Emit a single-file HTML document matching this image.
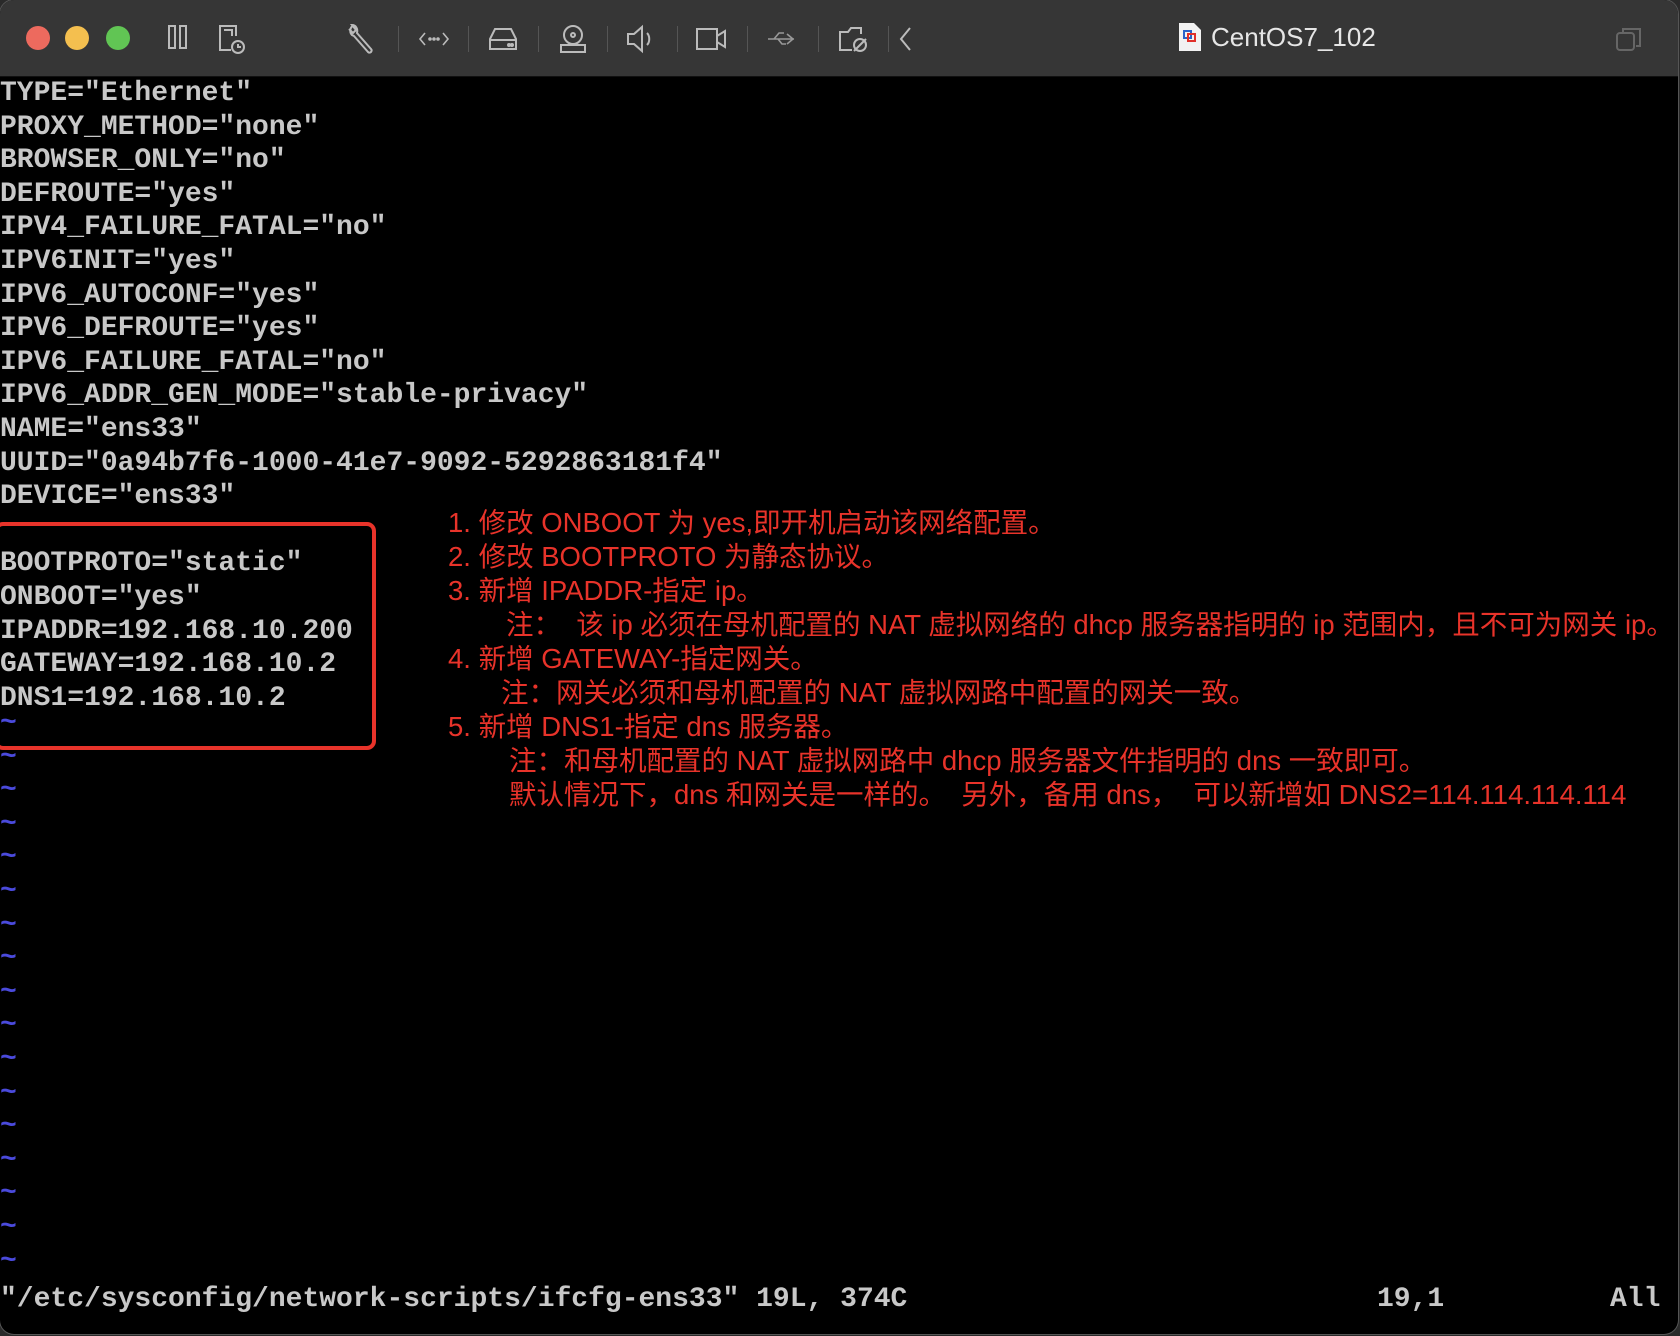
<!DOCTYPE html>
<html><head><meta charset="utf-8"><style>
html,body{margin:0;padding:0;background:#2a2a2a;width:1680px;height:1336px;overflow:hidden}
.win{position:absolute;left:0;top:0;width:1678px;height:1334px;border-radius:14px;overflow:hidden;background:#000;box-shadow:0 0 0 1px #555}
.bar{position:absolute;left:0;top:0;right:0;height:76px;background:#363636;border-bottom:1px solid #111}
.dot{position:absolute;top:26px;width:24px;height:24px;border-radius:50%}
.ic{position:absolute;top:22px}
.sep{position:absolute;top:26px;width:1px;height:26px;background:#555}
.title{position:absolute;left:1211px;top:22px;font:26px "Liberation Sans",sans-serif;color:#e6e6e6}
.term{position:absolute;left:0;top:77px;font:28px/33.6px "Liberation Mono",monospace;color:#c8c8c8;white-space:pre;font-weight:bold}
.tl{position:absolute;left:0;top:707px;font:bold 28px/33.6px "Liberation Mono",monospace;color:#4a4adc;white-space:pre}
.box{position:absolute;left:-6px;top:522px;width:374px;height:220px;border:4px solid #e8332a;border-radius:9px}
.note{position:absolute;color:#e8332a;font:27.5px "Liberation Sans","Noto Sans CJK SC",sans-serif;white-space:pre;line-height:34px}
.status{position:absolute;top:1284px;font:28px "Liberation Mono",monospace;color:#c8c8c8;white-space:pre;font-weight:bold}
</style></head><body>
<div class="win">
<div class="bar">
<div class="dot" style="left:26px;background:#ed6a5e"></div>
<div class="dot" style="left:65px;background:#f4bf4f"></div>
<div class="dot" style="left:106px;background:#61c554"></div>
<svg class="ic" style="left:166px" width="26" height="32" viewBox="0 0 26 32" fill="none" stroke="#bbb" stroke-width="2"><rect x="3" y="4" width="6" height="22"/><rect x="14" y="4" width="6" height="22"/></svg>
<svg class="ic" style="left:216px" width="32" height="34" viewBox="0 0 32 34" fill="none" stroke="#bbb" stroke-width="2"><path d="M15 28H4V4h16v10"/><path d="M8 8h8v6"/><circle cx="22" cy="25" r="6"/><path d="M22 22v3h3"/></svg>
<svg class="ic" style="left:346px" width="32" height="34" viewBox="0 0 32 34" fill="none" stroke="#bbb" stroke-width="2"><path d="M8 3c-4 2-5 7-2 10l2 1 14 16c2 2 5-1 3-3L11 11c1-4-1-8-5-8l4 5-3 3-4-4"/></svg>
<div class="sep" style="left:398px"></div>
<svg class="ic" style="left:417px" width="34" height="34" viewBox="0 0 34 34" fill="none" stroke="#bbb" stroke-width="1.6"><path d="M8 11l-5 6 5 6M26 11l5 6-5 6"/><circle cx="13" cy="17" r="1" fill="#bbb"/><circle cx="17" cy="17" r="1" fill="#bbb"/><circle cx="21" cy="17" r="1" fill="#bbb"/></svg>
<div class="sep" style="left:468px"></div>
<svg class="ic" style="left:486px" width="34" height="34" viewBox="0 0 34 34" fill="none" stroke="#bbb" stroke-width="2"><path d="M4 27V17l5-10h16l5 10v10z"/><path d="M4 18h26"/><circle cx="23" cy="23" r="1" fill="#bbb"/><circle cx="26" cy="23" r="1" fill="#bbb"/></svg>
<div class="sep" style="left:538px"></div>
<svg class="ic" style="left:556px" width="34" height="34" viewBox="0 0 34 34" fill="none" stroke="#bbb" stroke-width="2"><circle cx="17" cy="13" r="9"/><circle cx="17" cy="13" r="2"/><rect x="5" y="23" width="24" height="7"/></svg>
<div class="sep" style="left:607px"></div>
<svg class="ic" style="left:624px" width="34" height="34" viewBox="0 0 34 34" fill="none" stroke="#bbb" stroke-width="2"><path d="M4 12h6l8-7v24l-8-7H4z"/><path d="M23 11c3 3 3 9 0 12"/></svg>
<div class="sep" style="left:677px"></div>
<svg class="ic" style="left:694px" width="34" height="34" viewBox="0 0 34 34" fill="none" stroke="#bbb" stroke-width="2"><rect x="3" y="7" width="20" height="20"/><path d="M23 14l8-5v16l-8-5"/></svg>
<div class="sep" style="left:747px"></div>
<svg class="ic" style="left:765px" width="34" height="34" viewBox="0 0 34 34" fill="none" stroke="#999" stroke-width="1.6"><path d="M3 17h26M22 12l6 5-6 5M9 17l5-6h5M13 17l4 5h4"/></svg>
<div class="sep" style="left:818px"></div>
<svg class="ic" style="left:836px" width="36" height="34" viewBox="0 0 36 34" fill="none" stroke="#bbb" stroke-width="2"><path d="M16 28H4V10h8l3-4h10v6"/><circle cx="24" cy="23" r="6"/><path d="M18 29l12-12"/></svg>
<div class="sep" style="left:888px"></div>
<svg class="ic" style="left:896px" width="20" height="34" viewBox="0 0 20 34" fill="none" stroke="#bbb" stroke-width="2"><path d="M14 6L5 17l9 11"/></svg>
<svg class="ic" style="left:1178px;top:22px" width="24" height="30" viewBox="0 0 24 30"><path d="M1 1h15l7 7v21H1z" fill="#f2f2f2"/><rect x="6" y="9" width="7" height="7" fill="none" stroke="#2a62c9" stroke-width="2"/><rect x="10" y="12" width="7" height="7" fill="none" stroke="#e0302a" stroke-width="2"/></svg>
<div class="title">CentOS7_102</div>
<svg class="ic" style="left:1614px;top:24px" width="30" height="30" viewBox="0 0 30 30" fill="none" stroke="#666" stroke-width="2"><rect x="3" y="9" width="17" height="17" rx="3"/><path d="M9 8V5h17v17h-4"/></svg>
</div>
<div class="term">TYPE="Ethernet"
PROXY_METHOD="none"
BROWSER_ONLY="no"
DEFROUTE="yes"
IPV4_FAILURE_FATAL="no"
IPV6INIT="yes"
IPV6_AUTOCONF="yes"
IPV6_DEFROUTE="yes"
IPV6_FAILURE_FATAL="no"
IPV6_ADDR_GEN_MODE="stable-privacy"
NAME="ens33"
UUID="0a94b7f6-1000-41e7-9092-5292863181f4"
DEVICE="ens33"

BOOTPROTO="static"
ONBOOT="yes"
IPADDR=192.168.10.200
GATEWAY=192.168.10.2
DNS1=192.168.10.2</div>
<div class="tl">~
~
~
~
~
~
~
~
~
~
~
~
~
~
~
~
~</div>
<div class="box"></div>
<div class="note" style="left:448px;top:506px">1. 修改 ONBOOT 为 yes,即开机启动该网络配置。
2. 修改 BOOTPROTO 为静态协议。
3. 新增 IPADDR-指定 ip。</div>
<div class="note" style="left:506px;top:608px">注：  该 ip 必须在母机配置的 NAT 虚拟网络的 dhcp 服务器指明的 ip 范围内，且不可为网关 ip。</div>
<div class="note" style="left:448px;top:642px">4. 新增 GATEWAY-指定网关。</div>
<div class="note" style="left:501px;top:676px">注：网关必须和母机配置的 NAT 虚拟网路中配置的网关一致。</div>
<div class="note" style="left:448px;top:710px">5. 新增 DNS1-指定 dns 服务器。</div>
<div class="note" style="left:509px;top:744px">注：和母机配置的 NAT 虚拟网路中 dhcp 服务器文件指明的 dns 一致即可。
默认情况下，dns 和网关是一样的。  另外，备用 dns，  可以新增如 DNS2=114.114.114.114</div>
<div class="status" style="left:0">"/etc/sysconfig/network-scripts/ifcfg-ens33" 19L, 374C</div>
<div class="status" style="left:1377px">19,1</div>
<div class="status" style="left:1610px">All</div>
</div>
</body></html>
